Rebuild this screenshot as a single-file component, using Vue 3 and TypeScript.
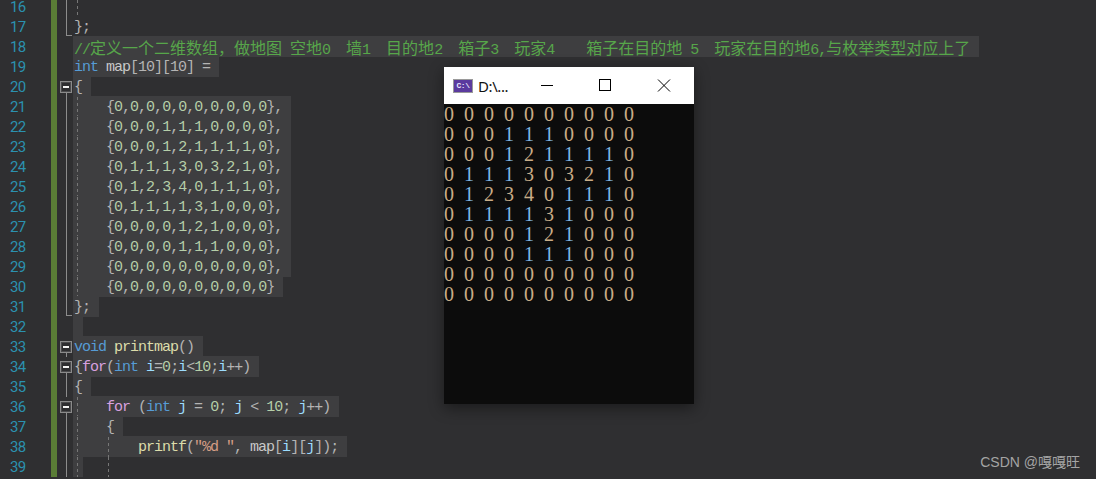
<script setup lang="ts">
type Kind = 'kw' | 'fn' | 'ctl' | 'var' | 'lit' | 'str' | 'com' | 'txt' | 'pun';
type Tok = [Kind, string];
type Fold = '' | 'box' | 'boxstem' | 'line' | 'end';
interface Line { n: number; fold: Fold; guides: number[]; toks: Tok[]; select: boolean }

function mapRow(values: string, comma: boolean): Tok[] {
  const out: Tok[] = [['txt', '    '], ['pun', '{']];
  values.split('').forEach((v, i) => {
    out.push(['lit', v]);
    if (i < 9) out.push(['pun', ',']);
  });
  out.push(['pun', comma ? '},' : '}']);
  return out;
}

const mapData = [
  '0000000000', '0001110000', '0001211110', '0111303210', '0123401110',
  '0111131000', '0000121000', '0000111000', '0000000000', '0000000000',
];

const lines: Line[] = [
  { n: 16, fold: 'line', guides: [4], toks: [], select: false },
  { n: 17, fold: 'end', guides: [], toks: [['pun', '};']], select: false },
  { n: 18, fold: '', guides: [], select: true, toks: [['com', '//定义一个二维数组，做地图 空地0  墙1  目的地2  箱子3  玩家4    箱子在目的地 5  玩家在目的地6,与枚举类型对应上了']] },
  { n: 19, fold: '', guides: [], select: true, toks: [['kw', 'int'], ['txt', ' map'], ['pun', '[10][10] =']] },
  { n: 20, fold: 'boxstem', guides: [], select: true, toks: [['pun', '{']] },
  ...mapData.map((d, i): Line => ({ n: 21 + i, fold: 'line', guides: [4], select: true, toks: mapRow(d, i < 9) })),
  { n: 31, fold: 'end', guides: [], select: true, toks: [['pun', '};']] },
  { n: 32, fold: '', guides: [], select: true, toks: [] },
  { n: 33, fold: 'boxstem', guides: [], select: true, toks: [['kw', 'void'], ['txt', ' '], ['fn', 'printmap'], ['pun', '()']] },
  { n: 34, fold: 'boxstem', guides: [], select: true, toks: [['pun', '{'], ['ctl', 'for'], ['pun', '('], ['kw', 'int'], ['txt', ' '], ['var', 'i'], ['pun', '='], ['lit', '0'], ['pun', ';'], ['var', 'i'], ['pun', '<'], ['lit', '10'], ['pun', ';'], ['var', 'i'], ['pun', '++)']] },
  { n: 35, fold: 'line', guides: [], select: true, toks: [['pun', '{']] },
  { n: 36, fold: 'boxstem', guides: [4], select: true, toks: [['txt', '    '], ['ctl', 'for'], ['txt', ' '], ['pun', '('], ['kw', 'int'], ['txt', ' '], ['var', 'j'], ['pun', ' = '], ['lit', '0'], ['pun', '; '], ['var', 'j'], ['pun', ' < '], ['lit', '10'], ['pun', '; '], ['var', 'j'], ['pun', '++)']] },
  { n: 37, fold: 'line', guides: [4], select: true, toks: [['txt', '    '], ['pun', '{']] },
  { n: 38, fold: 'line', guides: [4, 35], select: true, toks: [['txt', '        '], ['fn', 'printf'], ['pun', '('], ['str', '"%d "'], ['pun', ', '], ['txt', 'map'], ['pun', '['], ['var', 'i'], ['pun', ']['], ['var', 'j'], ['pun', ']);']] },
  { n: 39, fold: 'line', guides: [4, 35], select: true, toks: [] },
];

// CJK glyphs are double-width in the editor font: split them off so they can take their own size
function pieces(text: string): { text: string; cjk: boolean }[] {
  return (text.match(/[\u3000-\u9fff\uff00-\uffef]+|[^\u3000-\u9fff\uff00-\uffef]+/g) ?? []).map((p) => ({
    text: p,
    cjk: /[\u3000-\u9fff\uff00-\uffef]/.test(p),
  }));
}

const consoleRows = mapData.map((r) => r.split(''));
</script>

<template>
  <div class="screen">
    <div class="editor">
      <div v-for="line in lines" :key="line.n" class="row">
        <div class="gutter-num">{{ line.n }}</div>
        <div class="bar"></div>
        <div class="fold" :class="line.fold">
          <span v-if="line.fold === 'box' || line.fold === 'boxstem'" class="foldbox"></span>
        </div>
        <div class="code">
          <span class="text" :class="{ sel: line.select }"><template v-for="(t, i) in line.toks" :key="i"><span v-for="(p, j) in pieces(t[1])" :key="j" :class="[t[0], { cjk: p.cjk }]">{{ p.text }}</span></template></span>
          <i v-for="g in line.guides" :key="g" class="guide" :style="{ left: g + 'px' }"></i>
        </div>
      </div>
    </div>

    <div class="console">
      <div class="titlebar">
        <span class="appicon">C:\</span>
        <span class="title">D:\...</span>
        <div class="winbtns">
          <svg class="winbtn" width="58" height="37" viewBox="0 0 58 37"><path d="M23 18.5h12" stroke="#000" fill="none" /></svg>
          <svg class="winbtn" width="58" height="37" viewBox="0 0 58 37"><rect x="23.5" y="12.5" width="11" height="11" stroke="#000" fill="none" /></svg>
          <svg class="winbtn" width="58" height="37" viewBox="0 0 58 37"><path d="M24 12.5l12 12M36 12.5l-12 12" stroke="#000" fill="none" /></svg>
        </div>
      </div>
      <div class="output">
        <div v-for="(r, i) in consoleRows" :key="i" class="outrow">
          <span v-for="(d, j) in r" :key="j" class="digit" :class="{ one: d === '1' }">{{ d }}</span>
        </div>
      </div>
    </div>

    <div class="mark">CSDN @嘎嘎旺</div>
  </div>
</template>

<style scoped>
.screen {
  position: relative;
  width: 1096px;
  height: 479px;
  overflow: hidden;
  background: #2f2f31;
}
.editor {
  display: flex;
  flex-direction: column;
}
.row {
  display: flex;
  height: 20px;
  flex: none;
}
.row:first-child {
  height: 17px;
}
.row:first-child .gutter-num {
  line-height: 14px;
}
.gutter-num {
  width: 51px;
  padding-left: 10px;
  box-sizing: border-box;
  font: 15px/20px Roboto, sans-serif;
  letter-spacing: -0.6px;
  color: #2b91af;
}
.bar {
  width: 6px;
  background: #5a7d36;
}
.fold {
  position: relative;
  width: 16px;
  margin-left: 3px;
  margin-right: -3px;
  flex: none;
}
.fold.line::before,
.fold.end::before,
.fold.boxstem::before {
  content: '';
  position: absolute;
  left: 6px;
  width: 1px;
  background: #8c8c8c;
}
.fold.line::before { top: 0; bottom: 0; }
.fold.end::before { top: 0; height: 19px; }
.fold.end::after {
  content: '';
  position: absolute;
  left: 6px;
  top: 18px;
  width: 6px;
  height: 1px;
  background: #8c8c8c;
}
.fold.boxstem::before { top: 10px; bottom: 0; }
.foldbox {
  position: absolute;
  left: 0;
  top: 4px;
  width: 12px;
  height: 12px;
  box-sizing: border-box;
  background: #2d2d2f;
  border: 1px solid #8a8a8a;
  box-shadow: inset 0 0 0 1px #4a4a4c;
}
.foldbox::after {
  content: '';
  position: absolute;
  left: 2px;
  top: 4px;
  width: 6px;
  height: 2px;
  background: #f2f2f2;
}
.code {
  position: relative;
  flex: 1;
  min-width: 0;
}
.text {
  display: inline-block;
  height: 21px;
  margin-top: -1px;
  padding-left: 1px;
  padding-right: 9px;
  font: 15px/24px "Liberation Mono", monospace;
  letter-spacing: -1px;
  white-space: pre;
  vertical-align: top;
}
.text.sel { background: #3e3e40; }
.guide {
  position: absolute;
  top: 0;
  bottom: 0;
  width: 1px;
  background: repeating-linear-gradient(to bottom, #777 0 3px, transparent 3px 6px);
}
.cjk {
  font: 16px/22px "Noto Sans CJK SC", sans-serif;
  letter-spacing: 0;
}
.kw { color: #569cd6; }
.fn { color: #dcdcaa; }
.ctl { color: #d8a0df; }
.var { color: #9cdcfe; }
.lit { color: #b5cea8; }
.str { color: #d69d85; }
.com { color: #57a64a; }
.txt { color: #c8c8c8; }
.pun { color: #b4b4b4; }

.console {
  position: absolute;
  left: 444px;
  top: 67px;
  width: 250px;
  height: 337px;
  display: flex;
  flex-direction: column;
  background: #0c0c0c;
  box-shadow: 0 4px 14px rgba(0, 0, 0, 0.45);
}
.titlebar {
  display: flex;
  align-items: center;
  height: 37px;
  background: #fff;
  flex: none;
}
.appicon {
  width: 20px;
  height: 14px;
  margin-left: 9px;
  box-sizing: border-box;
  border: 1px solid #9a9a9a;
  background: #5b3a9e;
  color: #e6e6ff;
  font: bold 8px/12px "Liberation Mono", monospace;
  text-align: center;
  letter-spacing: -0.5px;
}
.title {
  margin-left: 5px;
  font: 15px/20px "Noto Sans", sans-serif;
  letter-spacing: -0.4px;
  color: #111;
}
.winbtns {
  display: flex;
  margin-left: auto;
  margin-right: 2px;
}
.winbtn { display: block; }
.output {
  font: 20px/20px "Liberation Serif", serif;
}
.outrow {
  display: flex;
  height: 20px;
}
.digit {
  width: 20px;
  flex: none;
  color: #c9ad88;
}
.digit.one {
  color: #7fb6e2;
}
.mark {
  position: absolute;
  right: 16px;
  top: 453px;
  font: 14px/18px "Liberation Sans", "Noto Sans CJK SC", sans-serif;
  color: #a4a4a4;
}
</style>
